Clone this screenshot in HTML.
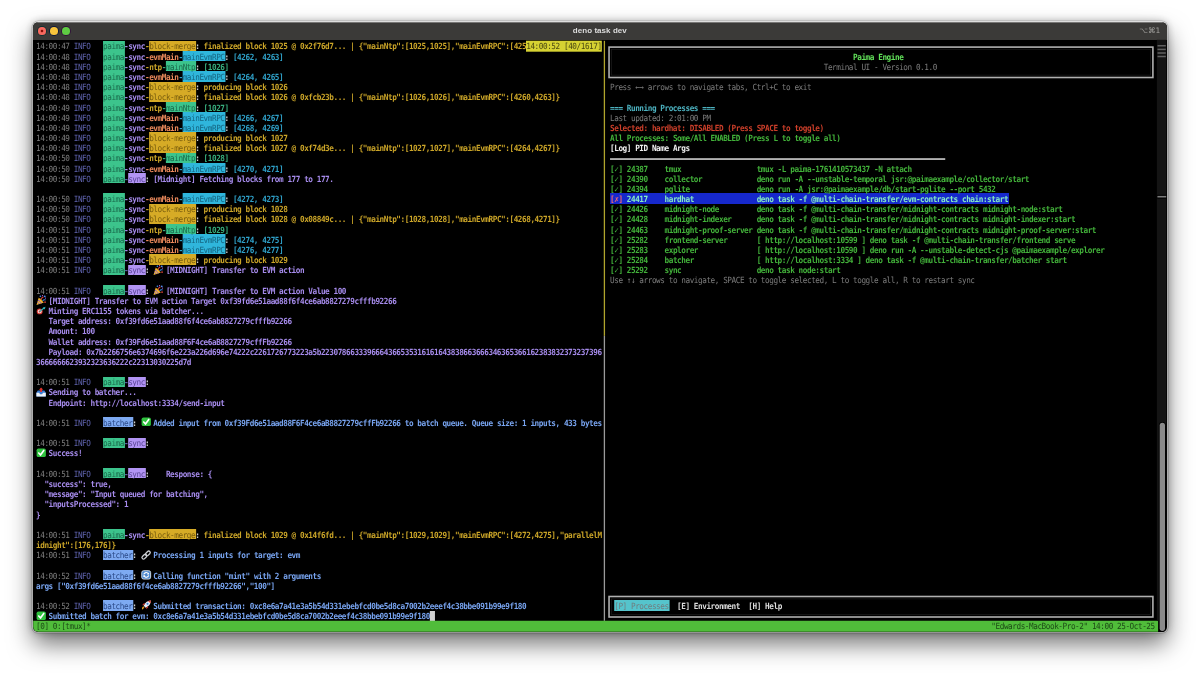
<!DOCTYPE html>
<html lang="en"><head><meta charset="utf-8"><title>deno task dev</title>
<style>
html,body{margin:0;padding:0;background:#fff}
body{width:1200px;height:677px;position:relative;overflow:hidden;font-family:"DejaVu Sans Mono","Liberation Mono",monospace}
#win{position:absolute;left:33.2px;top:22.2px;width:1133.70px;height:610.20px;background:#000;border-radius:5.5px 5.5px 5px 5px;box-shadow:0 -1px 0 0 rgba(255,255,255,.45),0 0 0 1px rgba(255,255,255,.32),0 0 0 1.6px rgba(0,0,0,.18),0 12px 24px rgba(0,0,0,.55),0 0 9px rgba(0,0,0,.32);overflow:hidden;will-change:transform}
#tb{position:absolute;left:0;top:0;width:100%;height:17.60px;background:#3b3a38;box-shadow:inset 0 .7px 0 rgba(255,255,255,.42)}
#tb .dot{position:absolute;top:5.05px;width:7.7px;height:7.7px;border-radius:50%}
#ttl{position:absolute;left:0;right:0;top:4.1px;text-align:center;font:bold 8px/10px "Liberation Sans","DejaVu Sans",sans-serif;color:#dcdcdc;letter-spacing:.05px}
#kb{position:absolute;right:6.3px;top:4px;font:7.6px/10px "DejaVu Sans","Liberation Sans",sans-serif;color:#a3a29f}
#scr{position:absolute;left:0;top:0;width:1200px;height:677px;will-change:transform}
.s{position:absolute;white-space:pre;font-size:7.7px;letter-spacing:-0.4384px;line-height:10.175px;height:10.175px;color:#ccc;font-weight:400;margin-top:1.65px;transform:scaleY(1.1);transform-origin:0 7.8px}
.b{font-weight:700}
#gfx{position:absolute;left:0;top:0}
.ln{position:absolute;display:block}
.box{position:absolute;display:block;border:1.6px solid #b2b2b2;box-shadow:inset 0 0 0 1.6px #000,inset 0 0 0 2.3px #2c2c2c}
.ic{position:absolute;display:block;width:8.38px;height:10.175px}
.ic svg{position:absolute;left:0;top:0;width:10.2px;height:10.2px;overflow:visible}
</style></head>
<body>
<div id="win"><div id="tb"><span class="dot" style="left:4.85px;background:radial-gradient(circle,#7c0a04 0,#8a100a .9px,#f8695f 1.7px);box-shadow:0 0 0 .9px rgba(0,45,45,.75)"></span><span class="dot" style="left:16.85px;background:#f8c43c;box-shadow:0 0 0 .9px rgba(0,15,60,.75)"></span><span class="dot" style="left:28.85px;background:#5fcb43;box-shadow:0 0 0 .9px rgba(45,0,60,.7)"></span><div id="ttl">deno task dev</div><div id="kb">⌥⌘1</div></div></div>
<div id="scr">
<svg id="gfx" width="1200" height="677" viewBox="0 0 1200 677"><rect x="103.04" y="41.00" width="21.85" height="10.00" fill="#3cc48c"/><rect x="149.13" y="41.00" width="46.99" height="10.00" fill="#d6ab26"/><rect x="103.04" y="51.00" width="21.85" height="10.00" fill="#3cc48c"/><rect x="182.65" y="51.00" width="42.80" height="10.00" fill="#2fb6dc"/><rect x="103.04" y="61.00" width="21.85" height="10.00" fill="#3cc48c"/><rect x="165.89" y="61.00" width="30.23" height="10.00" fill="#3cc48c"/><rect x="103.04" y="71.00" width="21.85" height="11.00" fill="#3cc48c"/><rect x="182.65" y="71.00" width="42.80" height="11.00" fill="#2fb6dc"/><rect x="103.04" y="82.00" width="21.85" height="10.00" fill="#3cc48c"/><rect x="149.13" y="82.00" width="46.99" height="10.00" fill="#d6ab26"/><rect x="103.04" y="92.00" width="21.85" height="10.00" fill="#3cc48c"/><rect x="149.13" y="92.00" width="46.99" height="10.00" fill="#d6ab26"/><rect x="103.04" y="102.00" width="21.85" height="10.00" fill="#3cc48c"/><rect x="165.89" y="102.00" width="30.23" height="10.00" fill="#3cc48c"/><rect x="103.04" y="112.00" width="21.85" height="10.00" fill="#3cc48c"/><rect x="182.65" y="112.00" width="42.80" height="10.00" fill="#2fb6dc"/><rect x="103.04" y="122.00" width="21.85" height="10.00" fill="#3cc48c"/><rect x="182.65" y="122.00" width="42.80" height="10.00" fill="#2fb6dc"/><rect x="103.04" y="132.00" width="21.85" height="11.00" fill="#3cc48c"/><rect x="149.13" y="132.00" width="46.99" height="11.00" fill="#d6ab26"/><rect x="103.04" y="143.00" width="21.85" height="10.00" fill="#3cc48c"/><rect x="149.13" y="143.00" width="46.99" height="10.00" fill="#d6ab26"/><rect x="103.04" y="153.00" width="21.85" height="10.00" fill="#3cc48c"/><rect x="165.89" y="153.00" width="30.23" height="10.00" fill="#3cc48c"/><rect x="103.04" y="163.00" width="21.85" height="10.00" fill="#3cc48c"/><rect x="182.65" y="163.00" width="42.80" height="10.00" fill="#2fb6dc"/><rect x="103.04" y="173.00" width="21.85" height="10.00" fill="#3cc48c"/><rect x="128.18" y="173.00" width="17.66" height="10.00" fill="#b294f4"/><rect x="103.04" y="193.00" width="21.85" height="11.00" fill="#3cc48c"/><rect x="182.65" y="193.00" width="42.80" height="11.00" fill="#2fb6dc"/><rect x="103.04" y="204.00" width="21.85" height="10.00" fill="#3cc48c"/><rect x="149.13" y="204.00" width="46.99" height="10.00" fill="#d6ab26"/><rect x="103.04" y="214.00" width="21.85" height="10.00" fill="#3cc48c"/><rect x="149.13" y="214.00" width="46.99" height="10.00" fill="#d6ab26"/><rect x="103.04" y="224.00" width="21.85" height="10.00" fill="#3cc48c"/><rect x="165.89" y="224.00" width="30.23" height="10.00" fill="#3cc48c"/><rect x="103.04" y="234.00" width="21.85" height="10.00" fill="#3cc48c"/><rect x="182.65" y="234.00" width="42.80" height="10.00" fill="#2fb6dc"/><rect x="103.04" y="244.00" width="21.85" height="10.00" fill="#3cc48c"/><rect x="182.65" y="244.00" width="42.80" height="10.00" fill="#2fb6dc"/><rect x="103.04" y="254.00" width="21.85" height="11.00" fill="#3cc48c"/><rect x="149.13" y="254.00" width="46.99" height="11.00" fill="#d6ab26"/><rect x="103.04" y="265.00" width="21.85" height="10.00" fill="#3cc48c"/><rect x="128.18" y="265.00" width="17.66" height="10.00" fill="#b294f4"/><rect x="103.04" y="285.00" width="21.85" height="10.00" fill="#3cc48c"/><rect x="128.18" y="285.00" width="17.66" height="10.00" fill="#b294f4"/><rect x="103.04" y="377.00" width="21.85" height="10.00" fill="#3cc48c"/><rect x="128.18" y="377.00" width="17.66" height="10.00" fill="#b294f4"/><rect x="103.04" y="417.00" width="30.23" height="10.00" fill="#7eaaf2"/><rect x="103.04" y="438.00" width="21.85" height="10.00" fill="#3cc48c"/><rect x="128.18" y="438.00" width="17.66" height="10.00" fill="#b294f4"/><rect x="103.04" y="468.00" width="21.85" height="10.00" fill="#3cc48c"/><rect x="128.18" y="468.00" width="17.66" height="10.00" fill="#b294f4"/><rect x="103.04" y="529.00" width="21.85" height="10.00" fill="#3cc48c"/><rect x="149.13" y="529.00" width="46.99" height="10.00" fill="#d6ab26"/><rect x="103.04" y="550.00" width="30.23" height="10.00" fill="#7eaaf2"/><rect x="103.04" y="570.00" width="30.23" height="10.00" fill="#7eaaf2"/><rect x="103.04" y="600.00" width="30.23" height="11.00" fill="#7eaaf2"/><rect x="429.86" y="611.00" width="5.09" height="10.00" fill="#d0d0d0"/><rect x="610.03" y="193.00" width="5.09" height="11.00" fill="#1628cc"/><rect x="614.22" y="193.00" width="5.09" height="11.00" fill="#1628cc"/><rect x="618.41" y="193.00" width="5.09" height="11.00" fill="#1628cc"/><rect x="622.60" y="193.00" width="386.38" height="11.00" fill="#1628cc"/><rect x="614.22" y="600.00" width="55.37" height="11.00" fill="#55c4cc"/><rect x="526.00" y="40.72" width="75.80" height="10.98" fill="#d6d232"/><rect x="603.75" y="40.82" width="1.30" height="295.08" fill="#b0a42c"/><rect x="603.75" y="335.90" width="1.30" height="284.90" fill="#9a9a9a"/><rect x="609.05" y="47.10" width="543.85" height="30.40" fill="none" stroke="#b0b0b0" stroke-width="1.6"/><rect x="611.65" y="49.50" width="538.65" height="25.60" fill="none" stroke="#222" stroke-width=".6"/><rect x="609.05" y="596.50" width="543.85" height="20.50" fill="none" stroke="#b0b0b0" stroke-width="1.6"/><rect x="611.65" y="598.90" width="538.65" height="15.70" fill="none" stroke="#222" stroke-width=".6"/><rect x="610.03" y="158.25" width="335.20" height="1.60" fill="#d0d0d0"/><path d="M33.20 620.80 H1158.1 V631.70 H38.20 A5 5 0 0 1 33.20 626.70 Z" fill="#50bc3a"/><rect x="1156.90" y="39.80" width="9.40" height="581.00" fill="#141414"/><rect x="1157.50" y="45.00" width="8.30" height="1.50" fill="#606060"/><rect x="1157.50" y="48.65" width="8.30" height="1.50" fill="#606060"/><rect x="1157.50" y="52.25" width="8.30" height="1.50" fill="#606060"/><rect x="1157.50" y="55.75" width="8.30" height="1.50" fill="#606060"/><rect x="1157.10" y="194.80" width="9.30" height="3.80" fill="#000"/><rect x="1157.40" y="195.90" width="8.80" height="1.60" fill="#7c7c7c"/><rect x="1158.90" y="421.90" width="6.90" height="210.00" fill="#000" rx="3.4"/><rect x="1159.70" y="422.70" width="5.30" height="208.20" fill="#8a8a8a" rx="2.6"/></svg>
<span class="s" style="left:36.00px;top:40.82px;color:#7e7e7e">14:00:47</span>
<span class="s" style="left:73.71px;top:40.82px;color:#5e62ac">INFO</span>
<span class="s" style="left:103.04px;top:40.82px;color:#1a6a4c">paima</span>
<span class="s b" style="left:123.99px;top:40.82px;color:#a68bec">-sync</span>
<span class="s b" style="left:144.94px;top:40.82px;color:#cba528">-</span>
<span class="s" style="left:149.13px;top:40.82px;color:#7a5e0e">block-merge</span>
<span class="s b" style="left:195.22px;top:40.82px;color:#cfcfcf">:</span>
<span class="s b" style="left:203.60px;top:40.82px;color:#cba528">finalized</span>
<span class="s b" style="left:245.50px;top:40.82px;color:#cba528">block 1025 @</span>
<span class="s b" style="left:299.97px;top:40.82px;color:#cba528">0x2f76d7... |</span>
<span class="s b" style="left:358.63px;top:40.82px;color:#cba528">{"mainNtp":[1025,1025],"mainEvmRPC":[425</span>
<span class="s" style="left:36.00px;top:51.00px;color:#7e7e7e">14:00:48</span>
<span class="s" style="left:73.71px;top:51.00px;color:#5e62ac">INFO</span>
<span class="s" style="left:103.04px;top:51.00px;color:#1a6a4c">paima</span>
<span class="s b" style="left:123.99px;top:51.00px;color:#a68bec">-sync</span>
<span class="s b" style="left:144.94px;top:51.00px;color:#ec8a5c">-evmMain</span>
<span class="s b" style="left:178.46px;top:51.00px;color:#2fa0c8">-</span>
<span class="s" style="left:182.65px;top:51.00px;color:#146480">mainEvmRPC</span>
<span class="s b" style="left:224.55px;top:51.00px;color:#cfcfcf">:</span>
<span class="s b" style="left:232.93px;top:51.00px;color:#2fa0c8">[4262, 4263]</span>
<span class="s" style="left:36.00px;top:61.17px;color:#7e7e7e">14:00:48</span>
<span class="s" style="left:73.71px;top:61.17px;color:#5e62ac">INFO</span>
<span class="s" style="left:103.04px;top:61.17px;color:#1a6a4c">paima</span>
<span class="s b" style="left:123.99px;top:61.17px;color:#a68bec">-sync</span>
<span class="s b" style="left:144.94px;top:61.17px;color:#cba528">-ntp</span>
<span class="s b" style="left:161.70px;top:61.17px;color:#38ae7e">-</span>
<span class="s" style="left:165.89px;top:61.17px;color:#1a6a4c">mainNtp</span>
<span class="s b" style="left:195.22px;top:61.17px;color:#cfcfcf">:</span>
<span class="s b" style="left:203.60px;top:61.17px;color:#38ae7e">[1026]</span>
<span class="s" style="left:36.00px;top:71.34px;color:#7e7e7e">14:00:48</span>
<span class="s" style="left:73.71px;top:71.34px;color:#5e62ac">INFO</span>
<span class="s" style="left:103.04px;top:71.34px;color:#1a6a4c">paima</span>
<span class="s b" style="left:123.99px;top:71.34px;color:#a68bec">-sync</span>
<span class="s b" style="left:144.94px;top:71.34px;color:#ec8a5c">-evmMain</span>
<span class="s b" style="left:178.46px;top:71.34px;color:#2fa0c8">-</span>
<span class="s" style="left:182.65px;top:71.34px;color:#146480">mainEvmRPC</span>
<span class="s b" style="left:224.55px;top:71.34px;color:#cfcfcf">:</span>
<span class="s b" style="left:232.93px;top:71.34px;color:#2fa0c8">[4264, 4265]</span>
<span class="s" style="left:36.00px;top:81.52px;color:#7e7e7e">14:00:48</span>
<span class="s" style="left:73.71px;top:81.52px;color:#5e62ac">INFO</span>
<span class="s" style="left:103.04px;top:81.52px;color:#1a6a4c">paima</span>
<span class="s b" style="left:123.99px;top:81.52px;color:#a68bec">-sync</span>
<span class="s b" style="left:144.94px;top:81.52px;color:#cba528">-</span>
<span class="s" style="left:149.13px;top:81.52px;color:#7a5e0e">block-merge</span>
<span class="s b" style="left:195.22px;top:81.52px;color:#cfcfcf">:</span>
<span class="s b" style="left:203.60px;top:81.52px;color:#cba528">producing</span>
<span class="s b" style="left:245.50px;top:81.52px;color:#cba528">block 1026</span>
<span class="s" style="left:36.00px;top:91.69px;color:#7e7e7e">14:00:48</span>
<span class="s" style="left:73.71px;top:91.69px;color:#5e62ac">INFO</span>
<span class="s" style="left:103.04px;top:91.69px;color:#1a6a4c">paima</span>
<span class="s b" style="left:123.99px;top:91.69px;color:#a68bec">-sync</span>
<span class="s b" style="left:144.94px;top:91.69px;color:#cba528">-</span>
<span class="s" style="left:149.13px;top:91.69px;color:#7a5e0e">block-merge</span>
<span class="s b" style="left:195.22px;top:91.69px;color:#cfcfcf">:</span>
<span class="s b" style="left:203.60px;top:91.69px;color:#cba528">finalized</span>
<span class="s b" style="left:245.50px;top:91.69px;color:#cba528">block 1026 @</span>
<span class="s b" style="left:299.97px;top:91.69px;color:#cba528">0xfcb23b... |</span>
<span class="s b" style="left:358.63px;top:91.69px;color:#cba528">{"mainNtp":[1026,1026],"mainEvmRPC":[4260,4263]}</span>
<span class="s" style="left:36.00px;top:101.87px;color:#7e7e7e">14:00:49</span>
<span class="s" style="left:73.71px;top:101.87px;color:#5e62ac">INFO</span>
<span class="s" style="left:103.04px;top:101.87px;color:#1a6a4c">paima</span>
<span class="s b" style="left:123.99px;top:101.87px;color:#a68bec">-sync</span>
<span class="s b" style="left:144.94px;top:101.87px;color:#cba528">-ntp</span>
<span class="s b" style="left:161.70px;top:101.87px;color:#38ae7e">-</span>
<span class="s" style="left:165.89px;top:101.87px;color:#1a6a4c">mainNtp</span>
<span class="s b" style="left:195.22px;top:101.87px;color:#cfcfcf">:</span>
<span class="s b" style="left:203.60px;top:101.87px;color:#38ae7e">[1027]</span>
<span class="s" style="left:36.00px;top:112.05px;color:#7e7e7e">14:00:49</span>
<span class="s" style="left:73.71px;top:112.05px;color:#5e62ac">INFO</span>
<span class="s" style="left:103.04px;top:112.05px;color:#1a6a4c">paima</span>
<span class="s b" style="left:123.99px;top:112.05px;color:#a68bec">-sync</span>
<span class="s b" style="left:144.94px;top:112.05px;color:#ec8a5c">-evmMain</span>
<span class="s b" style="left:178.46px;top:112.05px;color:#2fa0c8">-</span>
<span class="s" style="left:182.65px;top:112.05px;color:#146480">mainEvmRPC</span>
<span class="s b" style="left:224.55px;top:112.05px;color:#cfcfcf">:</span>
<span class="s b" style="left:232.93px;top:112.05px;color:#2fa0c8">[4266, 4267]</span>
<span class="s" style="left:36.00px;top:122.22px;color:#7e7e7e">14:00:49</span>
<span class="s" style="left:73.71px;top:122.22px;color:#5e62ac">INFO</span>
<span class="s" style="left:103.04px;top:122.22px;color:#1a6a4c">paima</span>
<span class="s b" style="left:123.99px;top:122.22px;color:#a68bec">-sync</span>
<span class="s b" style="left:144.94px;top:122.22px;color:#ec8a5c">-evmMain</span>
<span class="s b" style="left:178.46px;top:122.22px;color:#2fa0c8">-</span>
<span class="s" style="left:182.65px;top:122.22px;color:#146480">mainEvmRPC</span>
<span class="s b" style="left:224.55px;top:122.22px;color:#cfcfcf">:</span>
<span class="s b" style="left:232.93px;top:122.22px;color:#2fa0c8">[4268, 4269]</span>
<span class="s" style="left:36.00px;top:132.40px;color:#7e7e7e">14:00:49</span>
<span class="s" style="left:73.71px;top:132.40px;color:#5e62ac">INFO</span>
<span class="s" style="left:103.04px;top:132.40px;color:#1a6a4c">paima</span>
<span class="s b" style="left:123.99px;top:132.40px;color:#a68bec">-sync</span>
<span class="s b" style="left:144.94px;top:132.40px;color:#cba528">-</span>
<span class="s" style="left:149.13px;top:132.40px;color:#7a5e0e">block-merge</span>
<span class="s b" style="left:195.22px;top:132.40px;color:#cfcfcf">:</span>
<span class="s b" style="left:203.60px;top:132.40px;color:#cba528">producing</span>
<span class="s b" style="left:245.50px;top:132.40px;color:#cba528">block 1027</span>
<span class="s" style="left:36.00px;top:142.57px;color:#7e7e7e">14:00:49</span>
<span class="s" style="left:73.71px;top:142.57px;color:#5e62ac">INFO</span>
<span class="s" style="left:103.04px;top:142.57px;color:#1a6a4c">paima</span>
<span class="s b" style="left:123.99px;top:142.57px;color:#a68bec">-sync</span>
<span class="s b" style="left:144.94px;top:142.57px;color:#cba528">-</span>
<span class="s" style="left:149.13px;top:142.57px;color:#7a5e0e">block-merge</span>
<span class="s b" style="left:195.22px;top:142.57px;color:#cfcfcf">:</span>
<span class="s b" style="left:203.60px;top:142.57px;color:#cba528">finalized</span>
<span class="s b" style="left:245.50px;top:142.57px;color:#cba528">block 1027 @</span>
<span class="s b" style="left:299.97px;top:142.57px;color:#cba528">0xf74d3e... |</span>
<span class="s b" style="left:358.63px;top:142.57px;color:#cba528">{"mainNtp":[1027,1027],"mainEvmRPC":[4264,4267]}</span>
<span class="s" style="left:36.00px;top:152.75px;color:#7e7e7e">14:00:50</span>
<span class="s" style="left:73.71px;top:152.75px;color:#5e62ac">INFO</span>
<span class="s" style="left:103.04px;top:152.75px;color:#1a6a4c">paima</span>
<span class="s b" style="left:123.99px;top:152.75px;color:#a68bec">-sync</span>
<span class="s b" style="left:144.94px;top:152.75px;color:#cba528">-ntp</span>
<span class="s b" style="left:161.70px;top:152.75px;color:#38ae7e">-</span>
<span class="s" style="left:165.89px;top:152.75px;color:#1a6a4c">mainNtp</span>
<span class="s b" style="left:195.22px;top:152.75px;color:#cfcfcf">:</span>
<span class="s b" style="left:203.60px;top:152.75px;color:#38ae7e">[1028]</span>
<span class="s" style="left:36.00px;top:162.92px;color:#7e7e7e">14:00:50</span>
<span class="s" style="left:73.71px;top:162.92px;color:#5e62ac">INFO</span>
<span class="s" style="left:103.04px;top:162.92px;color:#1a6a4c">paima</span>
<span class="s b" style="left:123.99px;top:162.92px;color:#a68bec">-sync</span>
<span class="s b" style="left:144.94px;top:162.92px;color:#ec8a5c">-evmMain</span>
<span class="s b" style="left:178.46px;top:162.92px;color:#2fa0c8">-</span>
<span class="s" style="left:182.65px;top:162.92px;color:#146480">mainEvmRPC</span>
<span class="s b" style="left:224.55px;top:162.92px;color:#cfcfcf">:</span>
<span class="s b" style="left:232.93px;top:162.92px;color:#2fa0c8">[4270, 4271]</span>
<span class="s" style="left:36.00px;top:173.09px;color:#7e7e7e">14:00:50</span>
<span class="s" style="left:73.71px;top:173.09px;color:#5e62ac">INFO</span>
<span class="s" style="left:103.04px;top:173.09px;color:#1a6a4c">paima</span>
<span class="s b" style="left:123.99px;top:173.09px;color:#5e62ac">-</span>
<span class="s" style="left:128.18px;top:173.09px;color:#5a4696">sync</span>
<span class="s b" style="left:144.94px;top:173.09px;color:#cfcfcf">:</span>
<span class="s b" style="left:153.32px;top:173.09px;color:#a68bec">[Midnight]</span>
<span class="s b" style="left:199.41px;top:173.09px;color:#a68bec">Fetching</span>
<span class="s b" style="left:237.12px;top:173.09px;color:#a68bec">blocks from</span>
<span class="s b" style="left:287.40px;top:173.09px;color:#a68bec">177 to 177.</span>
<span class="s" style="left:36.00px;top:193.44px;color:#7e7e7e">14:00:50</span>
<span class="s" style="left:73.71px;top:193.44px;color:#5e62ac">INFO</span>
<span class="s" style="left:103.04px;top:193.44px;color:#1a6a4c">paima</span>
<span class="s b" style="left:123.99px;top:193.44px;color:#a68bec">-sync</span>
<span class="s b" style="left:144.94px;top:193.44px;color:#ec8a5c">-evmMain</span>
<span class="s b" style="left:178.46px;top:193.44px;color:#2fa0c8">-</span>
<span class="s" style="left:182.65px;top:193.44px;color:#146480">mainEvmRPC</span>
<span class="s b" style="left:224.55px;top:193.44px;color:#cfcfcf">:</span>
<span class="s b" style="left:232.93px;top:193.44px;color:#2fa0c8">[4272, 4273]</span>
<span class="s" style="left:36.00px;top:203.62px;color:#7e7e7e">14:00:50</span>
<span class="s" style="left:73.71px;top:203.62px;color:#5e62ac">INFO</span>
<span class="s" style="left:103.04px;top:203.62px;color:#1a6a4c">paima</span>
<span class="s b" style="left:123.99px;top:203.62px;color:#a68bec">-sync</span>
<span class="s b" style="left:144.94px;top:203.62px;color:#cba528">-</span>
<span class="s" style="left:149.13px;top:203.62px;color:#7a5e0e">block-merge</span>
<span class="s b" style="left:195.22px;top:203.62px;color:#cfcfcf">:</span>
<span class="s b" style="left:203.60px;top:203.62px;color:#cba528">producing</span>
<span class="s b" style="left:245.50px;top:203.62px;color:#cba528">block 1028</span>
<span class="s" style="left:36.00px;top:213.80px;color:#7e7e7e">14:00:50</span>
<span class="s" style="left:73.71px;top:213.80px;color:#5e62ac">INFO</span>
<span class="s" style="left:103.04px;top:213.80px;color:#1a6a4c">paima</span>
<span class="s b" style="left:123.99px;top:213.80px;color:#a68bec">-sync</span>
<span class="s b" style="left:144.94px;top:213.80px;color:#cba528">-</span>
<span class="s" style="left:149.13px;top:213.80px;color:#7a5e0e">block-merge</span>
<span class="s b" style="left:195.22px;top:213.80px;color:#cfcfcf">:</span>
<span class="s b" style="left:203.60px;top:213.80px;color:#cba528">finalized</span>
<span class="s b" style="left:245.50px;top:213.80px;color:#cba528">block 1028 @</span>
<span class="s b" style="left:299.97px;top:213.80px;color:#cba528">0x08849c... |</span>
<span class="s b" style="left:358.63px;top:213.80px;color:#cba528">{"mainNtp":[1028,1028],"mainEvmRPC":[4268,4271]}</span>
<span class="s" style="left:36.00px;top:223.97px;color:#7e7e7e">14:00:51</span>
<span class="s" style="left:73.71px;top:223.97px;color:#5e62ac">INFO</span>
<span class="s" style="left:103.04px;top:223.97px;color:#1a6a4c">paima</span>
<span class="s b" style="left:123.99px;top:223.97px;color:#a68bec">-sync</span>
<span class="s b" style="left:144.94px;top:223.97px;color:#cba528">-ntp</span>
<span class="s b" style="left:161.70px;top:223.97px;color:#38ae7e">-</span>
<span class="s" style="left:165.89px;top:223.97px;color:#1a6a4c">mainNtp</span>
<span class="s b" style="left:195.22px;top:223.97px;color:#cfcfcf">:</span>
<span class="s b" style="left:203.60px;top:223.97px;color:#38ae7e">[1029]</span>
<span class="s" style="left:36.00px;top:234.15px;color:#7e7e7e">14:00:51</span>
<span class="s" style="left:73.71px;top:234.15px;color:#5e62ac">INFO</span>
<span class="s" style="left:103.04px;top:234.15px;color:#1a6a4c">paima</span>
<span class="s b" style="left:123.99px;top:234.15px;color:#a68bec">-sync</span>
<span class="s b" style="left:144.94px;top:234.15px;color:#ec8a5c">-evmMain</span>
<span class="s b" style="left:178.46px;top:234.15px;color:#2fa0c8">-</span>
<span class="s" style="left:182.65px;top:234.15px;color:#146480">mainEvmRPC</span>
<span class="s b" style="left:224.55px;top:234.15px;color:#cfcfcf">:</span>
<span class="s b" style="left:232.93px;top:234.15px;color:#2fa0c8">[4274, 4275]</span>
<span class="s" style="left:36.00px;top:244.32px;color:#7e7e7e">14:00:51</span>
<span class="s" style="left:73.71px;top:244.32px;color:#5e62ac">INFO</span>
<span class="s" style="left:103.04px;top:244.32px;color:#1a6a4c">paima</span>
<span class="s b" style="left:123.99px;top:244.32px;color:#a68bec">-sync</span>
<span class="s b" style="left:144.94px;top:244.32px;color:#ec8a5c">-evmMain</span>
<span class="s b" style="left:178.46px;top:244.32px;color:#2fa0c8">-</span>
<span class="s" style="left:182.65px;top:244.32px;color:#146480">mainEvmRPC</span>
<span class="s b" style="left:224.55px;top:244.32px;color:#cfcfcf">:</span>
<span class="s b" style="left:232.93px;top:244.32px;color:#2fa0c8">[4276, 4277]</span>
<span class="s" style="left:36.00px;top:254.50px;color:#7e7e7e">14:00:51</span>
<span class="s" style="left:73.71px;top:254.50px;color:#5e62ac">INFO</span>
<span class="s" style="left:103.04px;top:254.50px;color:#1a6a4c">paima</span>
<span class="s b" style="left:123.99px;top:254.50px;color:#a68bec">-sync</span>
<span class="s b" style="left:144.94px;top:254.50px;color:#cba528">-</span>
<span class="s" style="left:149.13px;top:254.50px;color:#7a5e0e">block-merge</span>
<span class="s b" style="left:195.22px;top:254.50px;color:#cfcfcf">:</span>
<span class="s b" style="left:203.60px;top:254.50px;color:#cba528">producing</span>
<span class="s b" style="left:245.50px;top:254.50px;color:#cba528">block 1029</span>
<span class="s" style="left:36.00px;top:264.67px;color:#7e7e7e">14:00:51</span>
<span class="s" style="left:73.71px;top:264.67px;color:#5e62ac">INFO</span>
<span class="s" style="left:103.04px;top:264.67px;color:#1a6a4c">paima</span>
<span class="s b" style="left:123.99px;top:264.67px;color:#5e62ac">-</span>
<span class="s" style="left:128.18px;top:264.67px;color:#5a4696">sync</span>
<span class="s b" style="left:144.94px;top:264.67px;color:#cfcfcf">:</span>
<span class="ic" style="left:153.32px;top:264.67px"><svg viewBox="0 0 10 10"><path d="M.5 9.7 L2.5 3.1 Q5.6 3.6 7.2 7.5 Z" fill="#f6bc2c"/><path d="M1.3 7.1 Q2.6 7.6 3.3 8.9 M1.9 5.1 Q4.2 5.9 5.3 8.2" stroke="#7d50d8" stroke-width=".9" fill="none"/><path d="M2.5 3.1 Q5.6 3.6 7.2 7.5" stroke="#c8861a" stroke-width=".9" fill="none"/><path d="M5.2 4.2 Q5.6 2.2 7.4 1.9" stroke="#e8433f" stroke-width="1" fill="none"/><path d="M6.6 5.6 Q7.6 4.4 9.4 4.9" stroke="#3f8ef0" stroke-width="1" fill="none"/><circle cx="8.6" cy="1.3" r=".9" fill="#4f8ff0"/><circle cx="4.3" cy="1.2" r=".8" fill="#3f8ef0"/><circle cx="8.9" cy="7" r=".8" fill="#e8433f"/><circle cx="6.4" cy=".7" r=".6" fill="#b45ae0"/><circle cx="9.3" cy="3" r=".6" fill="#b45ae0"/></svg></span>
<span class="s b" style="left:165.89px;top:264.67px;color:#a68bec">[MIDNIGHT]</span>
<span class="s b" style="left:211.98px;top:264.67px;color:#a68bec">Transfer to</span>
<span class="s b" style="left:262.26px;top:264.67px;color:#a68bec">EVM action</span>
<span class="s" style="left:36.00px;top:285.02px;color:#7e7e7e">14:00:51</span>
<span class="s" style="left:73.71px;top:285.02px;color:#5e62ac">INFO</span>
<span class="s" style="left:103.04px;top:285.02px;color:#1a6a4c">paima</span>
<span class="s b" style="left:123.99px;top:285.02px;color:#5e62ac">-</span>
<span class="s" style="left:128.18px;top:285.02px;color:#5a4696">sync</span>
<span class="s b" style="left:144.94px;top:285.02px;color:#cfcfcf">:</span>
<span class="ic" style="left:153.32px;top:285.02px"><svg viewBox="0 0 10 10"><path d="M.5 9.7 L2.5 3.1 Q5.6 3.6 7.2 7.5 Z" fill="#f6bc2c"/><path d="M1.3 7.1 Q2.6 7.6 3.3 8.9 M1.9 5.1 Q4.2 5.9 5.3 8.2" stroke="#7d50d8" stroke-width=".9" fill="none"/><path d="M2.5 3.1 Q5.6 3.6 7.2 7.5" stroke="#c8861a" stroke-width=".9" fill="none"/><path d="M5.2 4.2 Q5.6 2.2 7.4 1.9" stroke="#e8433f" stroke-width="1" fill="none"/><path d="M6.6 5.6 Q7.6 4.4 9.4 4.9" stroke="#3f8ef0" stroke-width="1" fill="none"/><circle cx="8.6" cy="1.3" r=".9" fill="#4f8ff0"/><circle cx="4.3" cy="1.2" r=".8" fill="#3f8ef0"/><circle cx="8.9" cy="7" r=".8" fill="#e8433f"/><circle cx="6.4" cy=".7" r=".6" fill="#b45ae0"/><circle cx="9.3" cy="3" r=".6" fill="#b45ae0"/></svg></span>
<span class="s b" style="left:165.89px;top:285.02px;color:#a68bec">[MIDNIGHT]</span>
<span class="s b" style="left:211.98px;top:285.02px;color:#a68bec">Transfer to</span>
<span class="s b" style="left:262.26px;top:285.02px;color:#a68bec">EVM action</span>
<span class="s b" style="left:308.35px;top:285.02px;color:#a68bec">Value 100</span>
<span class="ic" style="left:36.00px;top:295.20px"><svg viewBox="0 0 10 10"><path d="M.5 9.7 L2.5 3.1 Q5.6 3.6 7.2 7.5 Z" fill="#f6bc2c"/><path d="M1.3 7.1 Q2.6 7.6 3.3 8.9 M1.9 5.1 Q4.2 5.9 5.3 8.2" stroke="#7d50d8" stroke-width=".9" fill="none"/><path d="M2.5 3.1 Q5.6 3.6 7.2 7.5" stroke="#c8861a" stroke-width=".9" fill="none"/><path d="M5.2 4.2 Q5.6 2.2 7.4 1.9" stroke="#e8433f" stroke-width="1" fill="none"/><path d="M6.6 5.6 Q7.6 4.4 9.4 4.9" stroke="#3f8ef0" stroke-width="1" fill="none"/><circle cx="8.6" cy="1.3" r=".9" fill="#4f8ff0"/><circle cx="4.3" cy="1.2" r=".8" fill="#3f8ef0"/><circle cx="8.9" cy="7" r=".8" fill="#e8433f"/><circle cx="6.4" cy=".7" r=".6" fill="#b45ae0"/><circle cx="9.3" cy="3" r=".6" fill="#b45ae0"/></svg></span>
<span class="s b" style="left:48.57px;top:295.20px;color:#a68bec">[MIDNIGHT]</span>
<span class="s b" style="left:94.66px;top:295.20px;color:#a68bec">Transfer to</span>
<span class="s b" style="left:144.94px;top:295.20px;color:#a68bec">EVM action</span>
<span class="s b" style="left:191.03px;top:295.20px;color:#a68bec">Target</span>
<span class="s b" style="left:220.36px;top:295.20px;color:#a68bec">0xf39fd6e51aad88f6f4ce6ab8827279cfffb92266</span>
<span class="ic" style="left:36.00px;top:305.37px"><svg viewBox="0 0 10 10"><circle cx="3.6" cy="6.3" r="2.9" fill="#d8322c"/><circle cx="3.6" cy="6.3" r="1.9" fill="#f3e2e0"/><circle cx="3.6" cy="6.3" r=".95" fill="#d8322c"/><path d="M4 6 L7.6 3.2" stroke="#35b4bc" stroke-width="1.2" stroke-linecap="round"/><path d="M6.6 2.6 L9.3 1.6 L8.6 4.4 Z" fill="#35b4bc"/></svg></span>
<span class="s b" style="left:48.57px;top:305.37px;color:#a68bec">Minting</span>
<span class="s b" style="left:82.09px;top:305.37px;color:#a68bec">ERC1155 tokens</span>
<span class="s b" style="left:144.94px;top:305.37px;color:#a68bec">via batcher...</span>
<span class="s b" style="left:48.57px;top:315.55px;color:#a68bec">Target</span>
<span class="s b" style="left:77.90px;top:315.55px;color:#a68bec">address:</span>
<span class="s b" style="left:115.61px;top:315.55px;color:#a68bec">0xf39fd6e51aad88f6f4ce6ab8827279cfffb92266</span>
<span class="s b" style="left:48.57px;top:325.72px;color:#a68bec">Amount: 100</span>
<span class="s b" style="left:48.57px;top:335.90px;color:#a68bec">Wallet</span>
<span class="s b" style="left:77.90px;top:335.90px;color:#a68bec">address:</span>
<span class="s b" style="left:115.61px;top:335.90px;color:#a68bec">0xf39Fd6e51aad88F6F4ce6aB8827279cffFb92266</span>
<span class="s b" style="left:48.57px;top:346.07px;color:#a68bec">Payload:</span>
<span class="s b" style="left:86.28px;top:346.07px;color:#a68bec">0x7b2266756e6374696f6e223a226d696e74222c2261726773223a5b2230786633396664366535316161643838663666346365366162383832373237396</span>
<span class="s b" style="left:36.00px;top:356.25px;color:#a68bec">3666666623932323636222c22313030225d7d</span>
<span class="s" style="left:36.00px;top:376.60px;color:#7e7e7e">14:00:51</span>
<span class="s" style="left:73.71px;top:376.60px;color:#5e62ac">INFO</span>
<span class="s" style="left:103.04px;top:376.60px;color:#1a6a4c">paima</span>
<span class="s b" style="left:123.99px;top:376.60px;color:#5e62ac">-</span>
<span class="s" style="left:128.18px;top:376.60px;color:#5a4696">sync</span>
<span class="s b" style="left:144.94px;top:376.60px;color:#cfcfcf">:</span>
<span class="ic" style="left:36.00px;top:386.77px"><svg viewBox="0 0 10 10"><path d="M.4 5.6 L1.7 3.4 H8.3 L9.6 5.6 V9.3 H.4 Z" fill="#3d7cd4"/><path d="M.4 5.7 H3.1 L4 7 H6 L6.9 5.7 H9.6 V9.4 H.4 Z" fill="#eef2f7"/><path d="M5 .5 L7.1 2.8 H5.9 V4.9 H4.1 V2.8 H2.9 Z" fill="#e2332d"/></svg></span>
<span class="s b" style="left:48.57px;top:386.77px;color:#a68bec">Sending to</span>
<span class="s b" style="left:94.66px;top:386.77px;color:#a68bec">batcher...</span>
<span class="s b" style="left:48.57px;top:396.94px;color:#a68bec">Endpoint:</span>
<span class="s b" style="left:90.47px;top:396.94px;color:#a68bec">http://localhost:3334/send-input</span>
<span class="s" style="left:36.00px;top:417.30px;color:#7e7e7e">14:00:51</span>
<span class="s" style="left:73.71px;top:417.30px;color:#5e62ac">INFO</span>
<span class="s" style="left:103.04px;top:417.30px;color:#2c4a88">batcher</span>
<span class="s b" style="left:132.37px;top:417.30px;color:#cfcfcf">:</span>
<span class="ic" style="left:140.75px;top:417.30px"><svg viewBox="0 0 10 10"><rect x=".6" y=".45" width="9.1" height="8.5" rx="1.8" fill="#2fc23e"/><path d="M2.7 4.9 L4.4 6.9 L7.6 2.4" stroke="#fff" stroke-width="1.6" fill="none" stroke-linecap="round" stroke-linejoin="round"/></svg></span>
<span class="s b" style="left:153.32px;top:417.30px;color:#78a4f0">Added input</span>
<span class="s b" style="left:203.60px;top:417.30px;color:#78a4f0">from</span>
<span class="s b" style="left:224.55px;top:417.30px;color:#78a4f0">0xf39Fd6e51aad88F6F4ce6aB8827279cffFb92266</span>
<span class="s b" style="left:404.72px;top:417.30px;color:#78a4f0">to batch</span>
<span class="s b" style="left:442.43px;top:417.30px;color:#78a4f0">queue. Queue</span>
<span class="s b" style="left:496.90px;top:417.30px;color:#78a4f0">size: 1</span>
<span class="s b" style="left:530.42px;top:417.30px;color:#78a4f0">inputs, 433</span>
<span class="s b" style="left:580.70px;top:417.30px;color:#78a4f0">bytes</span>
<span class="s" style="left:36.00px;top:437.65px;color:#7e7e7e">14:00:51</span>
<span class="s" style="left:73.71px;top:437.65px;color:#5e62ac">INFO</span>
<span class="s" style="left:103.04px;top:437.65px;color:#1a6a4c">paima</span>
<span class="s b" style="left:123.99px;top:437.65px;color:#5e62ac">-</span>
<span class="s" style="left:128.18px;top:437.65px;color:#5a4696">sync</span>
<span class="s b" style="left:144.94px;top:437.65px;color:#cfcfcf">:</span>
<span class="ic" style="left:36.00px;top:447.82px"><svg viewBox="0 0 10 10"><rect x=".6" y=".45" width="9.1" height="8.5" rx="1.8" fill="#2fc23e"/><path d="M2.7 4.9 L4.4 6.9 L7.6 2.4" stroke="#fff" stroke-width="1.6" fill="none" stroke-linecap="round" stroke-linejoin="round"/></svg></span>
<span class="s b" style="left:48.57px;top:447.82px;color:#a68bec">Success!</span>
<span class="s" style="left:36.00px;top:468.17px;color:#7e7e7e">14:00:51</span>
<span class="s" style="left:73.71px;top:468.17px;color:#5e62ac">INFO</span>
<span class="s" style="left:103.04px;top:468.17px;color:#1a6a4c">paima</span>
<span class="s b" style="left:123.99px;top:468.17px;color:#5e62ac">-</span>
<span class="s" style="left:128.18px;top:468.17px;color:#5a4696">sync</span>
<span class="s b" style="left:144.94px;top:468.17px;color:#cfcfcf">:</span>
<span class="s b" style="left:165.89px;top:468.17px;color:#a68bec">Response: {</span>
<span class="s b" style="left:44.38px;top:478.35px;color:#a68bec">"success":</span>
<span class="s b" style="left:90.47px;top:478.35px;color:#a68bec">true,</span>
<span class="s b" style="left:44.38px;top:488.52px;color:#a68bec">"message":</span>
<span class="s b" style="left:90.47px;top:488.52px;color:#a68bec">"Input queued</span>
<span class="s b" style="left:149.13px;top:488.52px;color:#a68bec">for batching",</span>
<span class="s b" style="left:44.38px;top:498.70px;color:#a68bec">"inputsProcessed":</span>
<span class="s b" style="left:123.99px;top:498.70px;color:#a68bec">1</span>
<span class="s b" style="left:36.00px;top:508.87px;color:#a68bec">}</span>
<span class="s" style="left:36.00px;top:529.22px;color:#7e7e7e">14:00:51</span>
<span class="s" style="left:73.71px;top:529.22px;color:#5e62ac">INFO</span>
<span class="s" style="left:103.04px;top:529.22px;color:#1a6a4c">paima</span>
<span class="s b" style="left:123.99px;top:529.22px;color:#a68bec">-sync</span>
<span class="s b" style="left:144.94px;top:529.22px;color:#cba528">-</span>
<span class="s" style="left:149.13px;top:529.22px;color:#7a5e0e">block-merge</span>
<span class="s b" style="left:195.22px;top:529.22px;color:#cfcfcf">:</span>
<span class="s b" style="left:203.60px;top:529.22px;color:#cba528">finalized</span>
<span class="s b" style="left:245.50px;top:529.22px;color:#cba528">block 1029 @</span>
<span class="s b" style="left:299.97px;top:529.22px;color:#cba528">0x14f6fd... |</span>
<span class="s b" style="left:358.63px;top:529.22px;color:#cba528">{"mainNtp":[1029,1029],"mainEvmRPC":[4272,4275],"parallelM</span>
<span class="s b" style="left:36.00px;top:539.40px;color:#cba528">idnight":[176,176]}</span>
<span class="s" style="left:36.00px;top:549.57px;color:#7e7e7e">14:00:51</span>
<span class="s" style="left:73.71px;top:549.57px;color:#5e62ac">INFO</span>
<span class="s" style="left:103.04px;top:549.57px;color:#2c4a88">batcher</span>
<span class="s b" style="left:132.37px;top:549.57px;color:#cfcfcf">:</span>
<span class="ic" style="left:140.75px;top:549.57px"><svg viewBox="0 0 10 10"><g fill="none" stroke="#cdd0d4" stroke-width="1.25"><rect x=".6" y="5.1" width="5.4" height="3" rx="1.5" transform="rotate(-45 3.3 6.6)"/><rect x="4" y="1.9" width="5.4" height="3" rx="1.5" transform="rotate(-45 6.7 3.4)"/></g></svg></span>
<span class="s b" style="left:153.32px;top:549.57px;color:#78a4f0">Processing 1</span>
<span class="s b" style="left:207.79px;top:549.57px;color:#78a4f0">inputs for</span>
<span class="s b" style="left:253.88px;top:549.57px;color:#78a4f0">target: evm</span>
<span class="s" style="left:36.00px;top:569.92px;color:#7e7e7e">14:00:52</span>
<span class="s" style="left:73.71px;top:569.92px;color:#5e62ac">INFO</span>
<span class="s" style="left:103.04px;top:569.92px;color:#2c4a88">batcher</span>
<span class="s b" style="left:132.37px;top:569.92px;color:#cfcfcf">:</span>
<span class="ic" style="left:140.75px;top:569.92px"><svg viewBox="0 0 10 10"><rect x=".75" y=".7" width="8.7" height="8.2" rx="1.8" fill="#4a86cc" stroke="#d6e1ee" stroke-width=".9"/><path d="M2.7 4.3 A2.45 2.45 0 0 1 7.3 3.9 M7.5 5.3 A2.45 2.45 0 0 1 2.9 5.7" stroke="#fff" stroke-width="1.2" fill="none"/><path d="M7.9 2.5 V4.5 H5.9 Z M2.3 7.1 V5.1 H4.3 Z" fill="#fff"/></svg></span>
<span class="s b" style="left:153.32px;top:569.92px;color:#78a4f0">Calling</span>
<span class="s b" style="left:186.84px;top:569.92px;color:#78a4f0">function</span>
<span class="s b" style="left:224.55px;top:569.92px;color:#78a4f0">"mint" with 2</span>
<span class="s b" style="left:283.21px;top:569.92px;color:#78a4f0">arguments</span>
<span class="s b" style="left:36.00px;top:580.10px;color:#78a4f0">args</span>
<span class="s b" style="left:56.95px;top:580.10px;color:#78a4f0">["0xf39fd6e51aad88f6f4ce6ab8827279cfffb92266","100"]</span>
<span class="s" style="left:36.00px;top:600.45px;color:#7e7e7e">14:00:52</span>
<span class="s" style="left:73.71px;top:600.45px;color:#5e62ac">INFO</span>
<span class="s" style="left:103.04px;top:600.45px;color:#2c4a88">batcher</span>
<span class="s b" style="left:132.37px;top:600.45px;color:#cfcfcf">:</span>
<span class="ic" style="left:140.75px;top:600.45px"><svg viewBox="0 0 10 10"><path d="M3.4 7.4 L1 9.6 Q.6 8 2.1 6.2 Z" fill="#f8c324"/><path d="M3.1 7.2 L1.6 8.7 Q1.6 7.6 2.4 6.6 Z" fill="#f06a1c"/><path d="M9.7 .5 C6.4 .4 3.9 2.6 2.6 5.6 L4.6 7.6 C7.6 6.3 9.8 3.8 9.7 .5 Z" fill="#e6eaf0"/><path d="M9.7 .5 C8.6 .45 7.7 .65 6.9 1 L9.2 3.3 C9.55 2.5 9.75 1.6 9.7 .5 Z" fill="#d8382e"/><circle cx="6.4" cy="3.8" r="1.05" fill="#3a86dc"/><path d="M3 4.9 L1 5.1 L2.9 3.2 L4 3.4 Z M5.3 7.2 L5.1 9.2 L7 7.3 L6.8 6.2 Z" fill="#d8382e"/></svg></span>
<span class="s b" style="left:153.32px;top:600.45px;color:#78a4f0">Submitted</span>
<span class="s b" style="left:195.22px;top:600.45px;color:#78a4f0">transaction:</span>
<span class="s b" style="left:249.69px;top:600.45px;color:#78a4f0">0xc8e6a7a41e3a5b54d331ebebfcd0be5d8ca7002b2eeef4c38bbe091b99e9f180</span>
<span class="ic" style="left:36.00px;top:610.62px"><svg viewBox="0 0 10 10"><rect x=".6" y=".45" width="9.1" height="8.5" rx="1.8" fill="#2fc23e"/><path d="M2.7 4.9 L4.4 6.9 L7.6 2.4" stroke="#fff" stroke-width="1.6" fill="none" stroke-linecap="round" stroke-linejoin="round"/></svg></span>
<span class="s b" style="left:48.57px;top:610.62px;color:#78a4f0">Submitted</span>
<span class="s b" style="left:90.47px;top:610.62px;color:#78a4f0">batch for evm:</span>
<span class="s b" style="left:153.32px;top:610.62px;color:#78a4f0">0xc8e6a7a41e3a5b54d331ebebfcd0be5d8ca7002b2eeef4c38bbe091b99e9f180</span>
<span class="s" style="left:610.03px;top:81.52px;color:#7c7c7c">Press ←→</span>
<span class="s" style="left:647.74px;top:81.52px;color:#7c7c7c">arrows to</span>
<span class="s" style="left:689.64px;top:81.52px;color:#7c7c7c">navigate tabs,</span>
<span class="s" style="left:752.49px;top:81.52px;color:#7c7c7c">Ctrl+C to exit</span>
<span class="s b" style="left:610.03px;top:101.87px;color:#4cb2c0">=== Running</span>
<span class="s b" style="left:660.31px;top:101.87px;color:#4cb2c0">Processes ===</span>
<span class="s" style="left:610.03px;top:112.05px;color:#7c7c7c">Last updated:</span>
<span class="s" style="left:668.69px;top:112.05px;color:#7c7c7c">2:01:00 PM</span>
<span class="s b" style="left:610.03px;top:122.22px;color:#cd3f2a">Selected:</span>
<span class="s b" style="left:651.93px;top:122.22px;color:#cd3f2a">hardhat:</span>
<span class="s b" style="left:689.64px;top:122.22px;color:#cd3f2a">DISABLED</span>
<span class="s b" style="left:727.35px;top:122.22px;color:#cd3f2a">(Press SPACE</span>
<span class="s b" style="left:781.82px;top:122.22px;color:#cd3f2a">to toggle)</span>
<span class="s b" style="left:610.03px;top:132.40px;color:#42b23a">All Processes:</span>
<span class="s b" style="left:672.88px;top:132.40px;color:#42b23a">Some/All</span>
<span class="s b" style="left:710.59px;top:132.40px;color:#42b23a">ENABLED (Press</span>
<span class="s b" style="left:773.44px;top:132.40px;color:#42b23a">L to toggle</span>
<span class="s b" style="left:823.72px;top:132.40px;color:#42b23a">all)</span>
<span class="s b" style="left:610.03px;top:142.57px;color:#f0f0f0">[Log] PID Name</span>
<span class="s b" style="left:672.88px;top:142.57px;color:#f0f0f0">Args</span>
<span class="s b" style="left:610.03px;top:162.92px;color:#42b23a">[✓] 24387</span>
<span class="s b" style="left:664.50px;top:162.92px;color:#42b23a">tmux</span>
<span class="s b" style="left:756.68px;top:162.92px;color:#42b23a">tmux -L</span>
<span class="s b" style="left:790.20px;top:162.92px;color:#42b23a">paima-1761410573437</span>
<span class="s b" style="left:874.00px;top:162.92px;color:#42b23a">-N attach</span>
<span class="s b" style="left:610.03px;top:173.09px;color:#42b23a">[✓] 24390</span>
<span class="s b" style="left:664.50px;top:173.09px;color:#42b23a">collector</span>
<span class="s b" style="left:756.68px;top:173.09px;color:#42b23a">deno run -A</span>
<span class="s b" style="left:806.96px;top:173.09px;color:#42b23a">--unstable-temporal</span>
<span class="s b" style="left:890.76px;top:173.09px;color:#42b23a">jsr:@paimaexample/collector/start</span>
<span class="s b" style="left:610.03px;top:183.27px;color:#42b23a">[✓] 24394</span>
<span class="s b" style="left:664.50px;top:183.27px;color:#42b23a">pglite</span>
<span class="s b" style="left:756.68px;top:183.27px;color:#42b23a">deno run -A</span>
<span class="s b" style="left:806.96px;top:183.27px;color:#42b23a">jsr:@paimaexample/db/start-pglite</span>
<span class="s b" style="left:949.42px;top:183.27px;color:#42b23a">--port 5432</span>
<span class="s b" style="left:610.03px;top:193.44px;color:#f26a72">[</span>
<span class="s b" style="left:614.22px;top:193.44px;color:#f26a72">✗</span>
<span class="s b" style="left:618.41px;top:193.44px;color:#f26a72">]</span>
<span class="s b" style="left:626.79px;top:193.44px;color:#86ecc4">24417</span>
<span class="s b" style="left:664.50px;top:193.44px;color:#86ecc4">hardhat</span>
<span class="s b" style="left:756.68px;top:193.44px;color:#86ecc4">deno task -f</span>
<span class="s b" style="left:811.15px;top:193.44px;color:#86ecc4">@multi-chain-transfer/evm-contracts</span>
<span class="s b" style="left:961.99px;top:193.44px;color:#86ecc4">chain:start</span>
<span class="s b" style="left:610.03px;top:203.62px;color:#42b23a">[✓] 24426</span>
<span class="s b" style="left:664.50px;top:203.62px;color:#42b23a">midnight-node</span>
<span class="s b" style="left:756.68px;top:203.62px;color:#42b23a">deno task -f</span>
<span class="s b" style="left:811.15px;top:203.62px;color:#42b23a">@multi-chain-transfer/midnight-contracts</span>
<span class="s b" style="left:982.94px;top:203.62px;color:#42b23a">midnight-node:start</span>
<span class="s b" style="left:610.03px;top:213.80px;color:#42b23a">[✓] 24428</span>
<span class="s b" style="left:664.50px;top:213.80px;color:#42b23a">midnight-indexer</span>
<span class="s b" style="left:756.68px;top:213.80px;color:#42b23a">deno task -f</span>
<span class="s b" style="left:811.15px;top:213.80px;color:#42b23a">@multi-chain-transfer/midnight-contracts</span>
<span class="s b" style="left:982.94px;top:213.80px;color:#42b23a">midnight-indexer:start</span>
<span class="s b" style="left:610.03px;top:223.97px;color:#42b23a">[✓] 24463</span>
<span class="s b" style="left:664.50px;top:223.97px;color:#42b23a">midnight-proof-server</span>
<span class="s b" style="left:756.68px;top:223.97px;color:#42b23a">deno task -f</span>
<span class="s b" style="left:811.15px;top:223.97px;color:#42b23a">@multi-chain-transfer/midnight-contracts</span>
<span class="s b" style="left:982.94px;top:223.97px;color:#42b23a">midnight-proof-server:start</span>
<span class="s b" style="left:610.03px;top:234.15px;color:#42b23a">[✓] 25282</span>
<span class="s b" style="left:664.50px;top:234.15px;color:#42b23a">frontend-server</span>
<span class="s b" style="left:756.68px;top:234.15px;color:#42b23a">[</span>
<span class="s b" style="left:765.06px;top:234.15px;color:#42b23a">http://localhost:10599</span>
<span class="s b" style="left:861.43px;top:234.15px;color:#42b23a">] deno task -f</span>
<span class="s b" style="left:924.28px;top:234.15px;color:#42b23a">@multi-chain-transfer/frontend</span>
<span class="s b" style="left:1054.17px;top:234.15px;color:#42b23a">serve</span>
<span class="s b" style="left:610.03px;top:244.32px;color:#42b23a">[✓] 25283</span>
<span class="s b" style="left:664.50px;top:244.32px;color:#42b23a">explorer</span>
<span class="s b" style="left:756.68px;top:244.32px;color:#42b23a">[</span>
<span class="s b" style="left:765.06px;top:244.32px;color:#42b23a">http://localhost:10590</span>
<span class="s b" style="left:861.43px;top:244.32px;color:#42b23a">] deno run -A</span>
<span class="s b" style="left:920.09px;top:244.32px;color:#42b23a">--unstable-detect-cjs</span>
<span class="s b" style="left:1012.27px;top:244.32px;color:#42b23a">@paimaexample/explorer</span>
<span class="s b" style="left:610.03px;top:254.50px;color:#42b23a">[✓] 25284</span>
<span class="s b" style="left:664.50px;top:254.50px;color:#42b23a">batcher</span>
<span class="s b" style="left:756.68px;top:254.50px;color:#42b23a">[</span>
<span class="s b" style="left:765.06px;top:254.50px;color:#42b23a">http://localhost:3334</span>
<span class="s b" style="left:857.24px;top:254.50px;color:#42b23a">] deno task -f</span>
<span class="s b" style="left:920.09px;top:254.50px;color:#42b23a">@multi-chain-transfer/batcher</span>
<span class="s b" style="left:1045.79px;top:254.50px;color:#42b23a">start</span>
<span class="s b" style="left:610.03px;top:264.67px;color:#42b23a">[✓] 25292</span>
<span class="s b" style="left:664.50px;top:264.67px;color:#42b23a">sync</span>
<span class="s b" style="left:756.68px;top:264.67px;color:#42b23a">deno task</span>
<span class="s b" style="left:798.58px;top:264.67px;color:#42b23a">node:start</span>
<span class="s" style="left:610.03px;top:274.85px;color:#7c7c7c">Use ↑↓ arrows</span>
<span class="s" style="left:668.69px;top:274.85px;color:#7c7c7c">to navigate,</span>
<span class="s" style="left:723.16px;top:274.85px;color:#7c7c7c">SPACE to</span>
<span class="s" style="left:760.87px;top:274.85px;color:#7c7c7c">toggle</span>
<span class="s" style="left:790.20px;top:274.85px;color:#7c7c7c">selected, L to</span>
<span class="s" style="left:853.05px;top:274.85px;color:#7c7c7c">toggle all, R</span>
<span class="s" style="left:911.71px;top:274.85px;color:#7c7c7c">to restart</span>
<span class="s" style="left:957.80px;top:274.85px;color:#7c7c7c">sync</span>
<span class="s" style="left:614.22px;top:600.45px;color:#707c7e">[P] Processes</span>
<span class="s b" style="left:677.07px;top:600.45px;color:#dedede">[E]</span>
<span class="s b" style="left:693.83px;top:600.45px;color:#dedede">Environment</span>
<span class="s b" style="left:748.30px;top:600.45px;color:#dedede">[H] Help</span>
<span class="s" style="left:526.23px;top:40.82px;color:#4a4812">14:00:52</span>
<span class="s" style="left:563.94px;top:40.82px;color:#4a4812">[40/1617]</span>
<span class="s b" style="left:853.05px;top:51.00px;color:#62e25a">Paima Engine</span>
<span class="s" style="left:823.72px;top:61.17px;color:#7c7c7c">Terminal UI -</span>
<span class="s" style="left:882.38px;top:61.17px;color:#7c7c7c">Version 0.1.0</span>
<span class="s" style="left:36.00px;top:620.80px;color:#1c4a16">[0] 0:[tmux]*</span>
<span class="s" style="left:991.32px;top:620.80px;color:#1c4a16">"Edwards-MacBook-Pro-2"</span>
<span class="s" style="left:1091.88px;top:620.80px;color:#1c4a16">14:00</span>
<span class="s" style="left:1117.02px;top:620.80px;color:#1c4a16">25-Oct-25</span>
</div>
</body></html>
